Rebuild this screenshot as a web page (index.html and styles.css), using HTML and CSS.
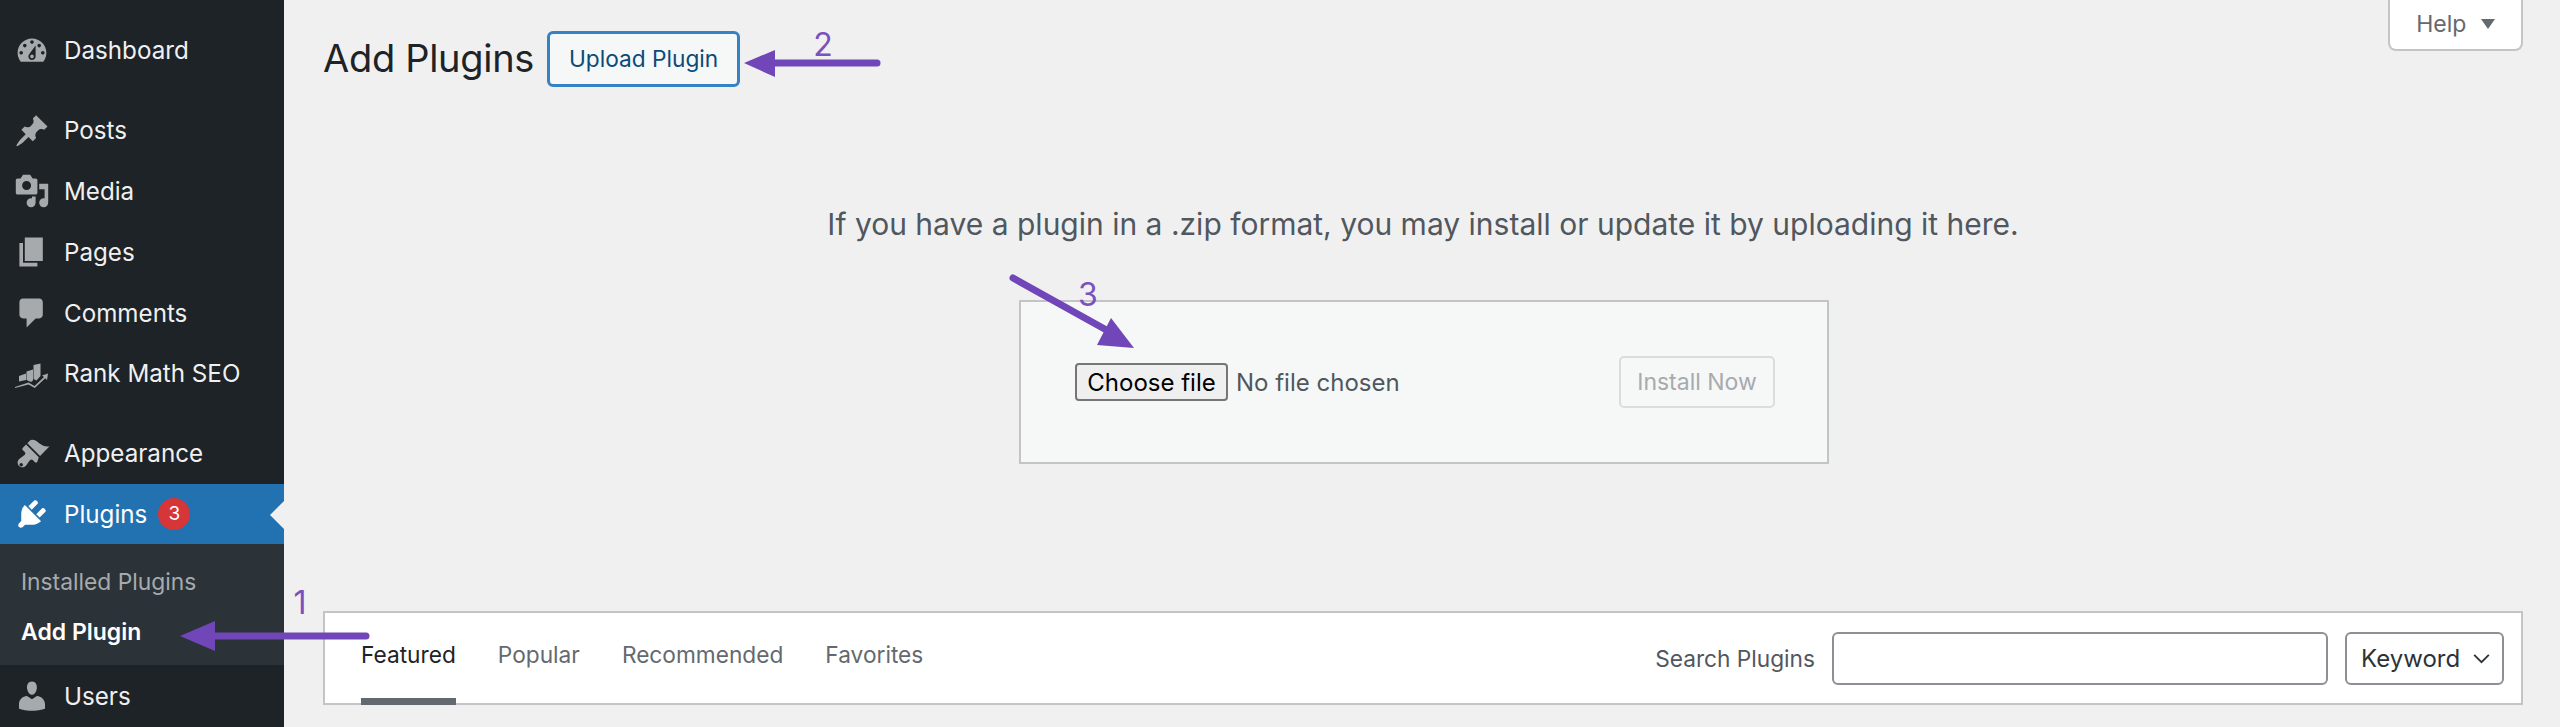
FILE: index.html
```html
<!DOCTYPE html>
<html lang="en">
<head>
    <meta charset="UTF-8">
    <meta name="viewport" content="width=device-width, initial-scale=1.0">
    <title>Add Plugins</title>
    <link rel="stylesheet" href="styles.css">
</head>
<body>

    <nav class="sidebar">
        <ul class="menu menu-first">
            <li class="menu-item">
                <svg class="menu-icon" viewBox="0 0 20 20"><path fill-rule="evenodd" d="M3.76 16h12.48c1.1-1.37 1.76-3.11 1.76-5 0-4.42-3.58-8-8-8s-8 3.58-8 8c0 1.89.66 3.63 1.76 5zM10 4c.55 0 1 .45 1 1s-.45 1-1 1-1-.45-1-1 .45-1 1-1zM6 6c.55 0 1 .45 1 1s-.45 1-1 1-1-.45-1-1 .45-1 1-1zm8 0c.55 0 1 .45 1 1s-.45 1-1 1-1-.45-1-1 .45-1 1-1zm-5.37 5.55L12 7v6c0 1.1-.9 2-2 2s-2-.9-2-2c0-.57.24-1.08.63-1.45zM4 10c.55 0 1 .45 1 1s-.45 1-1 1-1-.45-1-1 .45-1 1-1zm12 0c.55 0 1 .45 1 1s-.45 1-1 1-1-.45-1-1 .45-1 1-1zm-5 3c0-.55-.45-1-1-1s-1 .45-1 1 .45 1 1 1 1-.45 1-1z"/></svg>
                Dashboard
            </li>
        </ul>
        <ul class="menu menu-content">
            <li class="menu-item">
                <svg class="menu-icon" viewBox="0 0 20 20"><path d="M10.44 3.02l1.82-1.82 6.36 6.35-1.83 1.82c-1.05-.68-2.48-.57-3.41.36l-.75.75c-.92.93-1.04 2.35-.35 3.41l-1.83 1.82-2.41-2.41-2.8 2.79c-.42.42-3.38 2.71-3.8 2.29s1.86-3.39 2.28-3.81l2.79-2.79L4.1 9.36l1.83-1.82c1.05.69 2.48.57 3.4-.36l.75-.75c.93-.92 1.05-2.35.36-3.41z"/></svg>
                Posts
            </li>
            <li class="menu-item">
                <svg class="menu-icon" viewBox="0 0 20 20"><path fill-rule="evenodd" d="M13 11V4c0-.55-.45-1-1-1h-1.67L9 1H5L3.67 3H2c-.55 0-1 .45-1 1v7c0 .55.45 1 1 1h10c.55 0 1-.45 1-1zM7 4.5c1.38 0 2.5 1.12 2.5 2.5S8.38 9.5 7 9.5 4.5 8.38 4.5 7 5.62 4.5 7 4.5zM14 6h5v10.5c0 1.38-1.12 2.5-2.5 2.5S14 17.88 14 16.5s1.12-2.5 2.5-2.5c.17 0 .34.02.5.05V9h-3V6zm-4 8.05V13h2v3.5c0 1.38-1.12 2.5-2.5 2.5S7 17.88 7 16.5 8.12 14 9.5 14c.17 0 .34.02.5.05z"/></svg>
                Media
            </li>
            <li class="menu-item">
                <svg class="menu-icon" viewBox="0 0 20 20"><path d="M6 15V2h10v13H6zm-1 1h8v2H3V5h2v11z"/></svg>
                Pages
            </li>
            <li class="menu-item">
                <svg class="menu-icon" viewBox="0 0 20 20"><path d="M5 2h9c1.1 0 2 .9 2 2v7c0 1.1-.9 2-2 2h-2l-5 5v-5H5c-1.1 0-2-.9-2-2V4c0-1.1.9-2 2-2z"/></svg>
                Comments
            </li>
            <li class="menu-item">
                <svg class="menu-icon" viewBox="0 0 36 36"><path d="M5 20l7-2.500v6.500l-7 1.500zM12.500 15.500l6.500-2v11l-2 1.500-4.500-2zM19.500 9l7-1.500v12.500l-4 4.500-3-1.500z"/><path d="M1 31l13.500-4.500 6 3.500L30 21l-2-1.500 6-2-1 6.500-1.800-1.800L20.800 32l-6.300-3.500L1 32z"/></svg>
                Rank Math SEO
            </li>
        </ul>
        <ul class="menu menu-appearance">
            <li class="menu-item">
                <svg class="menu-icon" viewBox="0 0 20 20"><path d="M14.480 11.060L7.410 3.990l1.500-1.500c.5-.56 2.300-.47 3.510.32 1.210.8 1.430 1.280 2.910 2.100 1.180.64 2.450 1.260 4.450.85z"/><path fill-rule="evenodd" d="M13.770 11.770L6.700 4.700 4.930 6.470c-.39.39-.39 1.020 0 1.410l1.060 1.060c.39.39.39 1.030 0 1.420-.6.6-1.430 1.110-2.210 1.690-.35.26-.7.53-1.010.84-1.030 1.030-1.030 2.690 0 3.720s2.690 1.030 3.720 0c.31-.31.58-.66.84-1.010.58-.78 1.090-1.610 1.690-2.210.39-.39 1.030-.39 1.420 0l1.060 1.060c.39.39 1.020.39 1.410 0zM4 15a1 1 0 1 1 0 2 1 1 0 0 1 0-2z"/></svg>
                Appearance
            </li>
            <li class="menu-item active">
                <svg class="menu-icon" viewBox="0 0 20 20"><path d="M13.110 4.360L9.870 7.600 8 5.730l3.240-3.240c.35-.34 1.050-.2 1.560.32.52.51.66 1.210.31 1.550zm-8 1.770l.91-1.120 9.010 9.010-1.190.84c-.71.71-2.630 1.160-3.820 1.160H6.140L4.900 17.260c-.59.59-1.540.59-2.120 0-.59-.58-.59-1.530 0-2.120l1.240-1.240v-3.880c0-1.130.4-3.190 1.090-3.890zm7.260 3.970l3.240-3.240c.34-.35 1.040-.21 1.550.31.52.51.66 1.210.31 1.550l-3.240 3.250z"/></svg>
                <span class="menu-label">Plugins</span>
                <span class="badge">3</span>
            </li>
            <li class="submenu">
                <div class="submenu-item">Installed Plugins</div>
                <div class="submenu-item current">Add Plugin</div>
            </li>
            <li class="menu-item">
                <svg class="menu-icon" viewBox="0 0 20 20"><path d="M10 9.250c-2.270 0-2.730-3.440-2.730-3.440C7 4.020 7.820 2 9.970 2c2.160 0 2.980 2.020 2.710 3.810 0 0-.41 3.440-2.680 3.440zm0 2.570L12.720 10c2.390 0 4.520 2.330 4.520 4.530v2.490s-3.650 1.130-7.240 1.130c-3.650 0-7.240-1.130-7.240-1.130v-2.490c0-2.250 1.940-4.480 4.470-4.480z"/></svg>
                Users
            </li>
        </ul>
    </nav>

    <main class="content">
        <div class="heading">
            <h1 class="page-title">Add Plugins</h1>
            <a class="upload-btn">Upload Plugin</a>
            <div class="help-tab">Help <span class="help-arrow"></span></div>
        </div>

        <p class="upload-help">If you have a plugin in a .zip format, you may install or update it by uploading it here.</p>

        <form class="upload-box">
            <div class="file-field">
                <button class="file-btn" type="button">Choose file</button>
                <span class="file-name">No file chosen</span>
            </div>
            <button class="install-btn" type="button" disabled>Install Now</button>
        </form>

        <div class="filter-bar">
            <ul class="tabs">
                <li class="tab current">Featured</li>
                <li class="tab">Popular</li>
                <li class="tab">Recommended</li>
                <li class="tab">Favorites</li>
            </ul>
            <div class="search">
                <label class="search-label" for="search-input">Search Plugins</label>
                <input class="search-input" id="search-input" type="text">
                <div class="select-wrap">
                    <select class="search-select"><option>Keyword</option></select>
                    <svg class="select-chevron" viewBox="0 0 20 12"><path d="M2 2l8 8 8-8"/></svg>
                </div>
            </div>
        </div>
    </main>

    <!-- annotations drawn on top of the screenshot -->
    <svg class="annotations" viewBox="0 0 2560 727">
        <path class="arrow-line" d="M366 636H210"/>
        <path class="arrow-head" d="M180 636L215 621V651z"/>
        <text class="arrow-num" x="300" y="614">1</text>

        <path class="arrow-line" d="M877 63H770"/>
        <path class="arrow-head" d="M744 63L775 50V77z"/>
        <text class="arrow-num" x="823" y="56">2</text>

        <path class="arrow-line" d="M1013 278L1110 332"/>
        <path class="arrow-head" d="M1134 348L1097 345L1111 318z"/>
        <text class="arrow-num" x="1088" y="306">3</text>
    </svg>

</body>
</html>
```

FILE: styles.css
```css
* {
    box-sizing: border-box;
}
html, body {
    height: 100%;
}
body {
    margin: 0;
    display: flex;
    overflow: hidden;
    background: #f0f0f1;
    font-family: Inter, "Liberation Sans", sans-serif;
    color: #1d2327;
}
ul {
    list-style: none;
    margin: 0;
    padding: 0;
}

/* sidebar */
.sidebar {
    width: 284px;
    flex-shrink: 0;
    background: #1d2327;
    color: #f0f0f1;
    font-size: 24.2px;
}
.menu-first {
    margin-top: 20px;
}
.menu-content {
    margin-top: 19px;
}
.menu-appearance {
    margin-top: 19px;
}
.menu-item {
    position: relative;
    height: 60.8px;
    display: flex;
    align-items: center;
    padding-left: 14px;
    padding-top: 1px;
}
.menu-icon {
    width: 36px;
    height: 36px;
    margin-right: 14px;
    fill: #a7aaad;
    flex-shrink: 0;
}
.menu-item.active {
    background: #2271b1;
    color: #fff;
}
.menu-item.active .menu-icon {
    fill: #fff;
}
.menu-item.active::after {
    content: "";
    position: absolute;
    right: 0;
    top: 17px;
    border: 14px solid transparent;
    border-left-width: 0;
    border-right-color: #f0f0f1;
}
.badge {
    width: 32px;
    height: 32px;
    margin-left: 11px;
    border-radius: 50%;
    background: #d63638;
    color: #fff;
    font-size: 19px;
    line-height: 32px;
    text-align: center;
}
.submenu {
    background: #2c3338;
    padding: 12px 0 7px;
}
.submenu-item {
    height: 51px;
    line-height: 51px;
    padding-left: 21px;
    font-size: 22.8px;
    color: #a7aaad;
}
.submenu-item.current {
    color: #fff;
    font-weight: 600;
    font-size: 23px;
}

/* main column */
.content {
    flex: 1;
    min-width: 0;
    padding: 0 37px 0 39px;
}
.heading {
    display: flex;
    align-items: flex-start;
    height: 87px;
}
.page-title {
    margin: 35px 0 0;
    font-size: 38px;
    line-height: 46px;
    font-weight: 400;
    letter-spacing: -0.3px;
}
.upload-btn {
    margin: 31px 0 0 13px;
    width: 193px;
    height: 56px;
    line-height: 50px;
    text-align: center;
    border: 3px solid #3582c4;
    border-radius: 6px;
    background: #f6f7f7;
    color: #0a4b78;
    font-size: 22.7px;
}
.help-tab {
    margin-left: auto;
    width: 135px;
    height: 51px;
    padding-top: 10px;
    text-align: center;
    background: #fff;
    border: 2px solid #c3c4c7;
    border-top: 0;
    border-radius: 0 0 8px 8px;
    color: #646970;
    font-size: 23px;
}
.help-arrow {
    display: inline-block;
    margin-left: 8px;
    margin-bottom: 3px;
    border: 7px solid transparent;
    border-bottom-width: 0;
    border-top-width: 10px;
    border-top-color: #646970;
}
.upload-help {
    margin: 117px 0 0;
    line-height: 40px;
    text-align: center;
    font-size: 30px;
    color: #50575e;
}
.upload-box {
    width: 810px;
    height: 164px;
    margin: 56px 0 0 696px;
    padding: 0 52px 0 54px;
    display: flex;
    align-items: center;
    justify-content: space-between;
    background: #f6f7f7;
    border: 2px solid #c3c4c7;
}
.file-field {
    display: flex;
    align-items: center;
    gap: 8px;
}
.file-btn {
    width: 153px;
    height: 38px;
    padding: 0;
    font-family: inherit;
    font-size: 24px;
    color: #000;
    background: #efefef;
    border: 2px solid #767676;
    border-radius: 4px;
}
.file-name {
    font-size: 24px;
    color: #50575e;
}
.install-btn {
    width: 156px;
    height: 52px;
    font-family: inherit;
    font-size: 23px;
    color: #a7aaad;
    background: #f6f7f7;
    border: 2px solid #dcdcde;
    border-radius: 5px;
}

/* featured / popular bar */
.filter-bar {
    height: 94px;
    margin-top: 147px;
    display: flex;
    justify-content: space-between;
    background: #fff;
    border: 2px solid #c3c4c7;
}
.tabs {
    display: flex;
    gap: 42px;
    padding-left: 36px;
}
.tab {
    height: 92px;
    padding-top: 27px;
    font-size: 22.7px;
    line-height: 30px;
    color: #646970;
}
.tab.current {
    color: #1d2327;
    border-bottom: 7px solid #646970;
}
.search {
    display: flex;
    align-items: center;
    gap: 17px;
    padding-right: 17px;
}
.search-label {
    font-size: 22.7px;
    color: #50575e;
}
.search-input {
    width: 496px;
    height: 53px;
    background: #fff;
    border: 2px solid #8c8f94;
    border-radius: 6px;
}
.select-wrap {
    position: relative;
}
.search-select {
    display: block;
    width: 159px;
    height: 53px;
    padding: 0 0 0 14px;
    appearance: none;
    font-family: inherit;
    font-size: 24px;
    color: #2c3338;
    background: #fff;
    border: 2px solid #8c8f94;
    border-radius: 6px;
}
.select-chevron {
    position: absolute;
    right: 13px;
    top: 21px;
    width: 19px;
    height: 11px;
    fill: none;
    stroke: #2c3338;
    stroke-width: 2;
}

/* purple arrows */
.annotations {
    position: absolute;
    left: 0;
    top: 0;
    width: 2560px;
    height: 727px;
    pointer-events: none;
}
.arrow-line {
    fill: none;
    stroke: #7146b8;
    stroke-width: 7;
    stroke-linecap: round;
}
.arrow-head {
    fill: #7146b8;
}
.arrow-num {
    fill: #7a52bd;
    font-size: 32px;
    text-anchor: middle;
}
```
